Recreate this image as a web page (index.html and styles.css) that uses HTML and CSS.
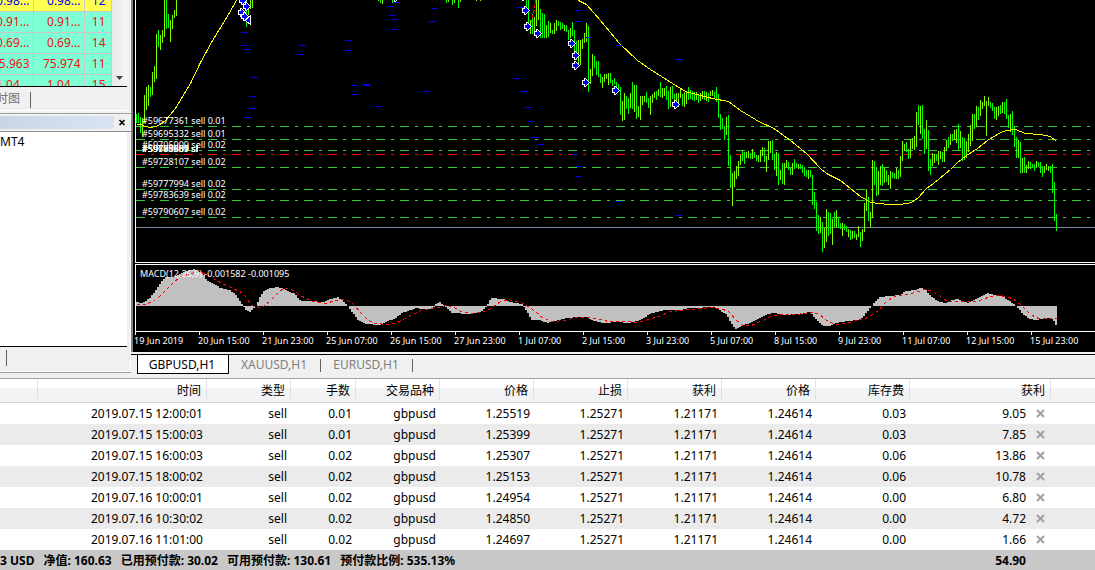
FILE: index.html
```
<!DOCTYPE html>
<html lang="zh-CN">
<head>
    <meta charset="UTF-8">
    <meta name="viewport" content="width=device-width, initial-scale=1.0">
    <title>GBPUSD,H1</title>
    <link rel="stylesheet" href="styles.css">
</head>
<body>
    <div class="workspace">
        <div class="side">
            <div class="market">
                <table class="symbols">
                    <tbody>
                        <tr class="selected"><td>0.98...</td><td>0.98...</td><td>12</td></tr>
                        <tr><td>0.91...</td><td>0.91...</td><td>11</td></tr>
                        <tr><td>0.69...</td><td>0.69...</td><td>14</td></tr>
                        <tr><td>75.963</td><td>75.974</td><td>11</td></tr>
                        <tr><td>1.04...</td><td>1.04...</td><td>15</td></tr>
                    </tbody>
                </table>
                <button class="scroll-down" aria-label="Scroll down">
                    <svg width="7" height="4" viewBox="0 0 7 4"><path d="M0 0H7L3.500 4Z" fill="#404040"/></svg>
                </button>
            </div>
            <div class="market-tabs"><button class="side-tab">时图</button></div>
            <div class="nav-title">
                <div class="nav-bar"></div>
                <button class="nav-close" aria-label="Close">
                    <svg width="8" height="7" viewBox="0 0 8 7"><path d="M1.500 1L6.500 6M6.500 1L1.500 6" stroke="#000" stroke-width="1.600"/></svg>
                </button>
            </div>
            <div class="nav-tree">MT4</div>
            <div class="nav-tabs"><span></span></div>
        </div>

        <div class="main">
            <div class="chart-window">
                <svg id="price" class="price"><g transform="translate(-136 0)"></g></svg>
                <svg id="macd" class="macd"><g transform="translate(-136 -265)"></g></svg>
                <svg id="dates" class="dates"><g transform="translate(-136 -332)"></g></svg>
            </div>
            <div class="chart-tabs">
                <button class="chart-tab active">GBPUSD,H1</button>
                <button class="chart-tab">XAUUSD,H1</button>
                <button class="chart-tab">EURUSD,H1</button>
            </div>
        </div>
    </div>

    <table class="trades">
        <colgroup>
            <col class="c-order"><col class="c-time"><col class="c-type"><col class="c-lots"><col class="c-type">
            <col class="c-price"><col class="c-price"><col class="c-price"><col class="c-price"><col class="c-price">
            <col class="c-profit"><col>
        </colgroup>
        <thead>
            <tr>
                <th></th><th>时间</th><th>类型</th><th>手数</th><th>交易品种</th><th>价格</th>
                <th>止损</th><th>获利</th><th>价格</th><th>库存费</th><th>获利</th><th></th>
            </tr>
        </thead>
        <tbody id="orders"></tbody>
        <tfoot>
            <tr>
                <td colspan="10">
                    <div class="balance">
                        <span>3 USD</span><span>净值: 160.63</span><span>已用预付款: 30.02</span>
                        <span>可用预付款: 130.61</span><span>预付款比例: 535.13%</span>
                    </div>
                </td>
                <td class="profit">54.90</td>
                <td></td>
            </tr>
        </tfoot>
    </table>

    <script src="chart.js"></script>
</body>
</html>
```
FILE: styles.css
```
* {
    box-sizing: border-box;
}
body, html {
    margin: 0;
    padding: 0;
    font-family: "Noto Sans", "Noto Sans CJK SC", sans-serif;
    font-size: 12px;
    background-color: #f0f0f0;
    overflow: hidden;
}
button {
    font: inherit;
    padding: 0;
    border: none;
    background: none;
}
svg {
    display: block;
}
.workspace {
    display: flex;
    height: 378px;
}

/* left panels */
.side {
    display: flex;
    flex-direction: column;
    flex: none;
    width: 131px;
    height: 373px;
    padding-right: 4px;
    border-bottom: 1px solid #a0a0a0;
    box-shadow: inset -1px -1px #fff, inset -3px 0 #f0f0f0;
}
.market {
    display: flex;
    height: 87px;
    overflow: hidden;
    border-bottom: 1px solid #000;
}
.symbols {
    flex: none;
    width: 139px;
    height: 105px;
    margin: -10px 0 0 -28px;
    table-layout: fixed;
    border-collapse: collapse;
    color: #f01010;
    background-color: #7fffd4;
}
.symbols td {
    height: 21px;
    padding: 0 3px;
    line-height: 18px;
    text-align: right;
    border: 1px solid #c8c8c8;
    border-left: none;
    width: 51px;
}
.symbols td:first-child {
    width: 61px;
}
.symbols td:last-child {
    width: 27px;
    padding-right: 5px;
}
.symbols .selected {
    color: #0000f0;
    background-color: #ffff50;
}
.scroll-down {
    display: flex;
    flex: 1;
    align-items: flex-end;
    justify-content: center;
    padding-bottom: 6px;
    background: linear-gradient(90deg, #e8e8e8, #f6f6f6);
}
.market-tabs {
    height: 24px;
    padding-top: 3px;
    border-bottom: 1px solid #fff;
}
.side-tab {
    width: 31px;
    height: 16px;
    line-height: 14px;
    padding-bottom: 2px;
    margin-left: -4px;
    box-sizing: content-box;
    height: 14px;
    color: #707070;
    text-align: left;
    border-right: 1px solid #606060;
    white-space: nowrap;
    padding-left: 0;
    padding-right: 3px;
}
.nav-title {
    display: flex;
    align-items: center;
    height: 19px;
    margin-top: 2px;
    margin-right: -4px;
    border-top: 1px solid #a0a0a0;
    border-bottom: 1px solid #909090;
}
.nav-bar {
    width: 114px;
    height: 13px;
    background: linear-gradient(90deg, #c8d6e4, #d8e4f1);
}
.nav-close {
    width: 16px;
    padding-left: 4px;
}
.nav-tree {
    flex: 1;
    padding-top: 1px;
    line-height: 18px;
    background-color: #fff;
    border-bottom: 1px solid #000;
}
.nav-tabs {
    height: 25px;
    padding-top: 3px;
}
.nav-tabs span {
    display: block;
    width: 7px;
    height: 16px;
    border-right: 1px solid #606060;
}

/* charts */
.main {
    flex: 1;
    min-width: 0;
}
.chart-window {
    padding: 0 0 8px 2px;
    height: 352px;
    background-color: #000;
    border-left: 2px solid #808080;
}
.chart-window svg {
    width: 100%;
}
.price {
    height: 263px;
    border-left: 1px solid #fff;
    border-bottom: 1px solid #fff;
    margin-bottom: 1px;
}
.macd {
    height: 68px;
    border: 1px solid #fff;
    border-right: none;
}
.dates {
    height: 18px;
    overflow: visible;
}
.chart-window text {
    font-family: "Noto Sans", sans-serif;
    font-size: 9px;
    fill: #fff;
}
.chart-tabs {
    display: flex;
    margin-top: 2px;
    border-top: 1px solid #000;
    height: 20px;
    padding-left: 6px;
}
.chart-tab {
    position: relative;
    width: 92px;
    height: 19px;
    padding-right: 2px;
    color: #808080;
}
.chart-tab + .chart-tab::after {
    content: "";
    position: absolute;
    right: 0;
    top: 4px;
    height: 13px;
    border-right: 1px solid #606060;
}
.chart-tab.active {
    color: #000;
    background-color: #fff;
    border: 1px solid #000;
    border-top: none;
}

/* open orders */
.trades {
    width: 100%;
    table-layout: fixed;
    border-collapse: separate;
    border-spacing: 0;
    background-color: #fff;
    border-top: 1px solid #a0a0a0;
}
.c-order { width: 38px; }
.c-time { width: 169px; }
.c-type { width: 84px; }
.c-lots { width: 65px; }
.c-price { width: 94px; }
.c-profit { width: 141px; }
.trades th {
    height: 24px;
    padding: 0 5px 0 0;
    font-weight: normal;
    line-height: 18px;
    text-align: right;
    background: linear-gradient(#fff 40%, #f3f4f6 40%, #f1f2f4);
    border-right: 1px solid #e0e2e5;
    border-bottom: 1px solid #d5d5d5;
}
.trades th:last-child {
    border-right: none;
}
.trades td {
    height: 21px;
    padding: 0 4px 0 0;
    line-height: 18px;
    text-align: right;
}
.trades tbody tr:nth-child(even) {
    background-color: #ebebeb;
}
.trades .profit {
    padding-right: 6px;
}
.profit div {
    display: flex;
    align-items: center;
    justify-content: flex-end;
    gap: 10px;
}
.trades tfoot td {
    font-weight: bold;
    background-color: #c8c8c8;
}
.trades tfoot .profit {
    padding-right: 25px;
}
.balance {
    display: flex;
    gap: 9px;
    white-space: nowrap;
}
```
FILE: chart.js
```
const UP = '#7fff00';
const DOWN = '#00ff00';

// price bars: one bar every 2px, "top-bottom" in 1/3px below base, u = up, d = down
const bars = [
    { x: 136, base: 0, data: '342-370d 340-370d 352-400d 354-410u 285-370u 262-330u 254-318u 262-290d 216-285u 198-246u 102-238u 90-140d 105-150u 90-128u 0-110u 0-87d 42-84d 60-126u 45-87u 30-54u 0-48u' },
    { x: 246, base: 0, data: '0-80d 18-45u 0-27u 0-25u' },
    { x: 378, base: 0, data: '0-3u 0-8d 0-12u' },
    { x: 392, base: 0, data: '0-9d 0-5u' },
    { x: 446, base: 0, data: '0-9d 0-5u' },
    { x: 452, base: 0, data: '0-15d 0-9u' },
    { x: 458, base: 0, data: '0-24d 0-6u' },
    { x: 476, base: 0, data: '0-3u' },
    { x: 480, base: 0, data: '0-3u' },
    { x: 526, base: 0, data: '0-30d 0-80d 60-102u 42-102d 51-100u 0-78u 0-60u 27-114d 39-114d 42-114d 75-114u 63-111d 69-99u 90-102d 69-102u 60-93u 63-78d 66-90d 69-87d 75-93u 75-96d 90-120d 84-114u 66-108d 90-156d 123-180d 120-195u 120-195u 117-147u 99-129u 69-126u 78-276d 207-252u 162-228u 168-204d 183-225d 183-231d 222-249d 231-264u 222-246u 222-237u 219-255u 219-249d 240-258d 234-252d 246-265d 252-270d' },
    { x: 620, base: 60, data: '82-165d 123-183u 99-180u 108-147d 114-162d 99-144u 66-147d 75-156u 76-177d 138-171u 108-180u 108-135u 108-126u 96-129d 114-144d 108-165u 102-129u 96-114u 93-120d 87-108u 66-112d 84-114u 84-108u 78-120d 93-147d 81-141u 78-117d 102-126d 99-129u 99-141u 87-114u 102-138d 96-141u 93-132u 80-120d 90-117d 93-120d 96-123d 96-120u 102-129d 99-123u 93-117u 93-120d 96-123u 99-126d 93-108u 90-108u 96-117d 80-126d 102-174d 162-210d 174-207d 198-240d 171-225u 165-318d 285-384d 339-438u 333-381u 318-357u 303-348u 285-315u 270-303d 276-312d 276-294u 273-294u 279-297d 267-297u 276-294d 285-303d 285-306u 270-306u 261-288u 264-306d 288-336u 243-300u 243-279u 240-300d 282-330d 276-348u 279-375d 330-360u 309-372d 309-375u 300-321u 306-330d 324-345d 309-345u 297-327d 309-324d 312-327u 312-327d 315-339d 321-348d 330-351d 330-357u 330-351d 345-435d 396-447d 426-513d 465-522d 471-519u 486-576d 504-564u 447-546u 456-528d 459-522d 477-555u 456-501d 450-501u 474-504d 489-507d 489-528u 492-510d 498-516d 507-531u' },
    { x: 850, base: 80, data: '450-480d 453-477u 453-474d 462-480u 438-471u 456-501d 447-483u 369-456u 327-393u 351-423d 396-441u 240-414u 243-315d 261-348d 273-345u 258-315u 252-318d 264-309u 270-306d 285-315u 273-327u 276-294d 279-297d 264-297u 270-297d 228-291u 183-243u 192-213u 186-216d 207-237d 177-234u 174-207u 168-210u 96-201u 75-135d 78-162u 75-177d 147-222d 120-207u 150-273d 237-285d 219-258u 222-249u 222-243d 213-255u 213-237u 216-246d 201-246u 180-213u 171-204d 162-195u 162-183d 150-180u 147-189u 132-210d 153-204u 171-243d 174-240d 183-234u 162-216u 135-198u 102-183u 102-147d 78-141u 81-120d 60-108u 66-87u 48-78u 63-168u 51-78u 66-84d 69-93d 81-117d 81-120u 78-108u 75-102d 66-99u 66-102d 57-117d 105-144d 102-156u 93-165d 138-201d 171-234d 180-234u 186-279d 234-279u 231-279d 255-279u 243-267u 246-267d 252-264d 252-273d 243-264u 246-261d 246-279d 258-291d 258-279u 252-270u 258-273u 258-279d 252-339d 306-423d 402-453d' }
];

const average = [
    '136,124 140,124 145,126 150,127 155,126 160,124 165,120 175,108 190,83 200,62 212,40 225,19 236,0',
    '578,0 586,4 600,20 619,43 637,60 650,69 672,83 685,91 700,95 712,98 728,101 740,110 760,122 772,127 790,140 806,153 820,168 826,173 840,180 860,196 870,202 888,204 900,204 911,202 918,197 926,188 933,183 950,169 957,162 966,155 977,148 987,140 1000,132 1006,130 1015,129 1025,133 1040,134 1050,136 1056,141'
];

const levels = [
    [126, '#59677361 sell 0.01'], [139, '#59695332 sell 0.01'], [150, '#59705909 sell 0.02'],
    [167, '#59728107 sell 0.02'], [189, '#59777994 sell 0.02'], [200, '#59783639 sell 0.02'],
    [217, '#59790607 sell 0.02']
];
const stops = ['#59677361 sl', '#59705909 sl', '#59783639 sl', '#59790607 sl'];

const marks = [[241,32],[241,45],[243,49],[251,77],[249,96],[249,108],[245,117],[299,45],[297,54],[345,40],[345,50],
    [351,85],[351,94],[363,84],[363,85],[375,106],[393,2],[387,6],[389,15],[391,19],[391,29],[431,8],[429,21],[423,91],
    [517,7],[513,78],[521,91],[525,107],[527,121],[531,137],[537,144],[575,10],[575,21],[585,37],[615,45],[675,59],
    [571,154],[575,166],[575,176],[615,201],[675,215]];

const arrows = [[242,0],[246,6],[241,12],[244,16],[395,-3],[523,-4],[525,10],[527,26],[537,33],[571,43],
    [575,55],[575,65],[585,82],[615,90],[675,104]];

const histogram = [[136,302],[143,303],[150,298],[156,290],[163,280],[166,277],[175,277],[183,272],[195,269],[203,273],
    [207,281],[215,284],[220,288],[230,290],[236,295],[243,305],[247,311],[250,312],[256,306],[260,297],[264,291],
    [270,288],[278,287],[285,289],[290,292],[294,293],[301,301],[310,301],[324,302],[331,299],[338,297],[343,301],
    [348,306],[353,313],[359,321],[366,324],[380,325],[388,321],[396,318],[402,313],[411,310],[417,308],[422,309],
    [432,309],[436,304],[440,302],[446,307],[452,313],[470,314],[482,311],[487,306],[491,298],[503,299],[510,302],
    [522,304],[526,310],[532,320],[540,320],[548,323],[555,321],[566,318],[580,317],[586,317],[592,320],[602,323],
    [618,322],[630,323],[640,320],[652,313],[665,310],[680,310],[690,308],[715,307],[718,309],[727,315],[733,326],
    [736,329],[742,326],[754,321],[768,314],[775,313],[783,315],[800,314],[810,312],[815,318],[823,326],[829,326],
    [840,322],[850,321],[861,319],[868,311],[871,307],[875,302],[880,297],[890,296],[900,295],[906,291],[916,290],
    [921,287],[925,289],[931,296],[938,301],[945,303],[950,301],[957,299],[968,303],[975,300],[981,296],[988,293],
    [996,295],[1002,296],[1010,301],[1015,305],[1018,308],[1024,315],[1030,319],[1036,320],[1050,318],[1053,319],[1056,325]];

const signal = '136,304 145,304 155,300 163,292 174,281 182,275 190,274 197,270 207,275 216,280 224,284 235,289 241,292 246,297 251,305 256,307 262,307 270,300 277,293 283,288 291,289 300,295 312,301 325,303 335,300 345,299 353,304 360,312 368,320 375,323 388,324 397,322 410,315 423,309 435,308 445,305 452,306 460,311 470,313 480,312 489,309 500,301 508,299 523,303 535,311 543,318 552,321 565,320 574,317 590,317 600,319 608,321 625,321 637,322 648,319 658,316 670,311 690,309 710,307 720,308 728,311 735,319 742,325 751,325 760,321 773,315 780,314 795,314 812,312 818,313 826,320 835,324 845,323 856,320 868,317 878,310 886,301 894,296 905,294 915,292 924,289 930,290 940,296 947,301 975,301 982,299 990,296 1000,295 1012,298 1020,304 1030,314 1038,318 1056,318';

const dates = ['19 Jun 2019', '20 Jun 15:00', '21 Jun 23:00', '25 Jun 07:00', '26 Jun 15:00', '27 Jun 23:00',
    '1 Jul 07:00', '2 Jul 15:00', '3 Jul 23:00', '5 Jul 07:00', '8 Jul 15:00', '9 Jul 23:00', '11 Jul 07:00',
    '12 Jul 15:00', '15 Jul 23:00'];

const orders = [
    ['2019.07.15 12:00:01', '0.01', '1.25519', '0.03', '9.05'],
    ['2019.07.15 15:00:03', '0.01', '1.25399', '0.03', '7.85'],
    ['2019.07.15 16:00:03', '0.02', '1.25307', '0.06', '13.86'],
    ['2019.07.15 18:00:02', '0.02', '1.25153', '0.06', '10.78'],
    ['2019.07.16 10:00:01', '0.02', '1.24954', '0.00', '6.80'],
    ['2019.07.16 10:30:02', '0.02', '1.24850', '0.00', '4.72'],
    ['2019.07.16 11:01:00', '0.02', '1.24697', '0.00', '1.66']
];

const rect = (x, y, w, h, fill) => `<rect x="${x}" y="${y}" width="${w}" height="${h}" fill="${fill}"/>`;
const text = (x, y, s) => `<text x="${x}" y="${y}">${s}</text>`;
const level = (y, color) =>
    `<path d="M136 ${y + 0.5}H4000" stroke="${color}" stroke-dasharray="9 6 3 6" shape-rendering="crispEdges"/>`;
const line = (points, color, dash) =>
    `<polyline points="${points}" transform="translate(.5 .5)" fill="none" stroke="${color}" stroke-dasharray="${dash}" shape-rendering="crispEdges"/>`;

function drawPrice() {
    let out = levels.map(l => level(l[0], '#32cd32')).join('') + level(154, '#ff0000');
    out += rect(136, 227, 4000, 1, '#778899');
    bars.forEach(run => {
        run.data.split(' ').forEach((bar, i) => {
            const [top, bottom] = bar.slice(0, -1).split('-').map(v => run.base + Math.round(v / 3));
            out += rect(run.x + i * 2, top, 1, bottom - top, bar.endsWith('u') ? UP : DOWN);
        });
    });
    out += average.map(points => line(points, '#ffff00', 'none')).join('');
    out += line('535,0 534,8 531,20 530,26', '#ff0000', '3 2');
    out += marks.map(m => rect(m[0], m[1], 7, 1, '#0000ff')).join('');
    // right-pointing entry arrows, white outline one pixel wide
    out += arrows.map(a =>
        `<g transform="translate(${a[0]} ${a[1]})" shape-rendering="crispEdges">
            <path d="M-3 -2H-1V-4H1V-3H2V-2H3V-1H4V0H5V1H4V2H3V3H2V4H1V5H-1V3H-3Z" fill="#fff"/>
            <path d="M-2 -1H0V-3H1V-2H2V-1H3V0H4V1H3V2H2V3H1V4H0V2H-2Z" fill="#0000ff"/>
        </g>`
    ).join('');
    out += '<path d="M245 20.500L250.500 15.500V24.500Z" fill="#0000ff" stroke="#fff" shape-rendering="crispEdges"/>';
    out += levels.map(l => text(142, l[0] - 2, l[1])).join('');
    out += stops.map(s => text(142, 152, s)).join('');
    document.querySelector('#price g').innerHTML = out;
}

function drawMacd() {
    let out = '';
    let k = 0;
    for (let x = 136; x <= 1056; x += 2) {
        while (k < histogram.length - 2 && histogram[k + 1][0] < x) k++;
        const [x1, y1] = histogram[k];
        const [x2, y2] = histogram[k + 1];
        const y = Math.round(y1 + (y2 - y1) * (x - x1) / (x2 - x1));
        out += rect(x - 1, Math.min(y, 306), 2, Math.abs(y - 306), '#c0c0c0');
    }
    out += line(signal, '#ff0000', '3 3');
    out += text(140, 277, 'MACD(12,26,9) -0.001582 -0.001095');
    document.querySelector('#macd g').innerHTML = out;
}

function drawDates() {
    document.querySelector('#dates g').innerHTML = dates.map((d, i) =>
        rect(136 + i * 64, 332, 1, 3, '#fff') + text(135 + i * 64, 344, d)
    ).join('');
}

function fillOrders() {
    const cross = '<svg width="9" height="9" viewBox="0 0 9 9"><path d="M1 1L8 8M8 1L1 8" stroke="#a0a0a0" stroke-width="2"/></svg>';
    document.getElementById('orders').innerHTML = orders.map(o => `
        <tr>
            <td></td><td>${o[0]}</td><td>sell</td><td>${o[1]}</td><td>gbpusd</td><td>${o[2]}</td>
            <td>1.25271</td><td>1.21171</td><td>1.24614</td><td>${o[3]}</td>
            <td class="profit"><div>${o[4]}<button aria-label="Close order">${cross}</button></div></td><td></td>
        </tr>`).join('');
}

drawPrice();
drawMacd();
drawDates();
fillOrders();
```
